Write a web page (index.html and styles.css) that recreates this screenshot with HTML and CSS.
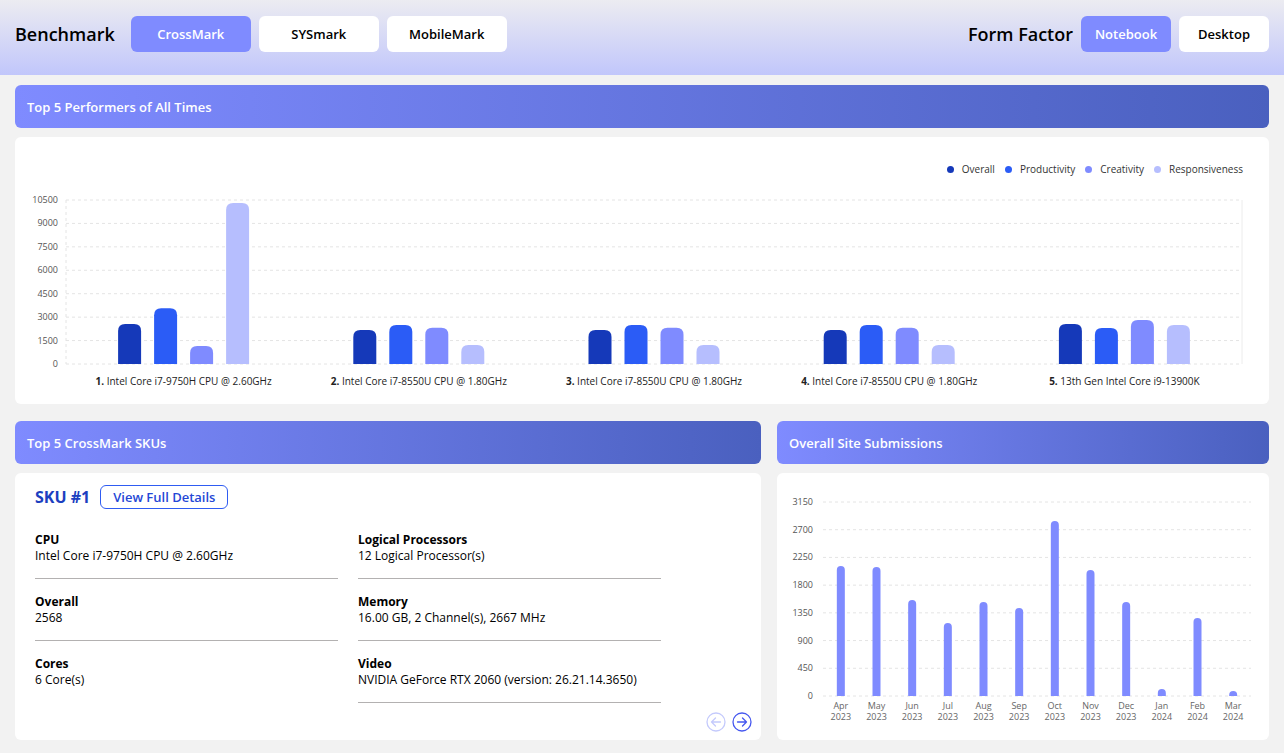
FILE: index.html
```html
<!DOCTYPE html>
<html lang="en">
<head>
  <meta charset="UTF-8">
  <meta name="viewport" content="width=device-width, initial-scale=1.0">
  <title>Benchmark Dashboard</title>
  <link rel="stylesheet" href="styles.css">
</head>
<body>
  <header class="topbar">
    <div class="switch">
      <span class="switch-title wide">Benchmark</span>
      <button class="tab active">CrossMark</button>
      <button class="tab">SYSmark</button>
      <button class="tab">MobileMark</button>
    </div>
    <div class="switch">
      <span class="switch-title">Form Factor</span>
      <button class="tab narrow active">Notebook</button>
      <button class="tab narrow">Desktop</button>
    </div>
  </header>

  <main class="content">
    <section class="panel">
      <h2 class="panel-title">Top 5 Performers of All Times</h2>
      <div class="card perf-card">
        <div class="legend">
          <span class="legend-item"><i class="dot c1"></i>Overall</span>
          <span class="legend-item"><i class="dot c2"></i>Productivity</span>
          <span class="legend-item"><i class="dot c3"></i>Creativity</span>
          <span class="legend-item"><i class="dot c4"></i>Responsiveness</span>
        </div>
        <svg id="perfChart" class="chart" width="1254" height="228"></svg>
      </div>
    </section>

    <div class="row">
      <section class="panel">
        <h2 class="panel-title">Top 5 CrossMark SKUs</h2>
        <div class="card sku-card">
          <div class="sku-head">
            <span class="sku-name">SKU #1</span>
            <button class="detail-btn">View Full Details</button>
          </div>
          <div class="sku-fields">
            <div class="sku-col">
              <div class="field">
                <div class="field-label">CPU</div>
                <div class="field-value">Intel Core i7-9750H CPU @ 2.60GHz</div>
              </div>
              <div class="field">
                <div class="field-label">Overall</div>
                <div class="field-value">2568</div>
              </div>
              <div class="field plain">
                <div class="field-label">Cores</div>
                <div class="field-value">6 Core(s)</div>
              </div>
            </div>
            <div class="sku-col">
              <div class="field">
                <div class="field-label">Logical Processors</div>
                <div class="field-value">12 Logical Processor(s)</div>
              </div>
              <div class="field">
                <div class="field-label">Memory</div>
                <div class="field-value">16.00 GB, 2 Channel(s), 2667 MHz</div>
              </div>
              <div class="field">
                <div class="field-label">Video</div>
                <div class="field-value">NVIDIA GeForce RTX 2060 (version: 26.21.14.3650)</div>
              </div>
            </div>
          </div>
          <div class="pager">
            <button class="page-btn disabled" aria-label="Previous">
              <svg width="20" height="20" viewBox="0 0 20 20"><circle cx="10" cy="10" r="9" /><path d="M14.5 10H5.5M9.5 6L5.5 10L9.5 14" /></svg>
            </button>
            <button class="page-btn" aria-label="Next">
              <svg width="20" height="20" viewBox="0 0 20 20"><circle cx="10" cy="10" r="9" /><path d="M5.5 10H14.5M10.5 6L14.5 10L10.5 14" /></svg>
            </button>
          </div>
        </div>
      </section>

      <section class="panel">
        <h2 class="panel-title">Overall Site Submissions</h2>
        <div class="card sub-card">
          <svg id="subChart" class="chart" width="492" height="267"></svg>
        </div>
      </section>
    </div>
  </main>

  <script>
    (function () {
      // rounded-top bar
      function bar(x, y, w, h, r, color) {
        r = Math.min(r, h);
        return `<path fill="${color}" d="M${x},${y + h} V${y + r} Q${x},${y} ${x + r},${y} H${x + w - r} Q${x + w},${y} ${x + w},${y + r} V${y + h} Z"/>`;
      }

      // Top 5 performers
      const perfColors = ['#1539b9', '#2b5cf6', '#7f8bff', '#b6befe'];
      const performers = [
        { n: '1.', name: 'Intel Core i7-9750H CPU @ 2.60GHz', v: [2568, 3566, 1152, 10307] },
        { n: '2.', name: 'Intel Core i7-8550U CPU @ 1.80GHz', v: [2177, 2497, 2324, 1216] },
        { n: '3.', name: 'Intel Core i7-8550U CPU @ 1.80GHz', v: [2177, 2497, 2324, 1216] },
        { n: '4.', name: 'Intel Core i7-8550U CPU @ 1.80GHz', v: [2177, 2497, 2324, 1216] },
        { n: '5.', name: '13th Gen Intel Core i9-13900K', v: [2561, 2305, 2817, 2497] }
      ];
      let yTop = 24, yBottom = 188, xLeft = 51, xRight = 1227, max = 10500;
      let out = '';
      for (let i = 0; i <= 7; i++) {
        const val = i * 1500;
        const y = yBottom - val / max * (yBottom - yTop);
        out += `<line class="grid" x1="${xLeft}" x2="${xRight}" y1="${y}" y2="${y}"/>`;
        out += `<text class="tick" x="43" y="${y + 3}" text-anchor="end">${val}</text>`;
      }
      out += `<line class="grid" x1="${xLeft}" x2="${xLeft}" y1="${yTop}" y2="${yBottom}"/>`;
      out += `<line class="edge" x1="${xRight}" x2="${xRight}" y1="${yTop}" y2="${yBottom}"/>`;
      const groupW = (xRight - xLeft) / performers.length;
      performers.forEach((p, i) => {
        const cx = xLeft + groupW * (i + 0.5);
        p.v.forEach((val, j) => {
          const h = val / max * (yBottom - yTop);
          out += bar(cx + (j - 1.5) * 36 - 11.5, yBottom - h, 23, h, 7, perfColors[j]);
        });
        out += `<text class="xlabel" x="${cx}" y="208.5" text-anchor="middle"><tspan font-weight="700">${p.n}</tspan> ${p.name}</text>`;
      });
      document.getElementById('perfChart').innerHTML = out;

      // Site submissions
      const months = [
        ['Apr', '2023', 2111], ['May', '2023', 2095], ['Jun', '2023', 1559], ['Jul', '2023', 1185],
        ['Aug', '2023', 1526], ['Sep', '2023', 1429], ['Oct', '2023', 2841], ['Nov', '2023', 2046],
        ['Dec', '2023', 1526], ['Jan', '2024', 114], ['Feb', '2024', 1266], ['Mar', '2024', 81]
      ];
      yTop = 29; yBottom = 223; xLeft = 46; xRight = 474; max = 3150;
      out = '';
      for (let i = 0; i <= 7; i++) {
        const val = i * 450;
        const y = yBottom - val / max * (yBottom - yTop);
        out += `<line class="grid" x1="${xLeft}" x2="${xRight}" y1="${y}" y2="${y}"/>`;
        out += `<text class="tick" x="36" y="${y + 3}" text-anchor="end">${val}</text>`;
      }
      const slot = (xRight - xLeft) / months.length;
      months.forEach((m, i) => {
        const cx = xLeft + slot * (i + 0.5);
        const h = m[2] / max * (yBottom - yTop);
        out += bar(cx - 4, yBottom - h, 8, h, 4, '#7f8bff');
        out += `<text class="mlabel" x="${cx}" y="235.5" text-anchor="middle">${m[0]}</text>`;
        out += `<text class="mlabel" x="${cx}" y="246.5" text-anchor="middle">${m[1]}</text>`;
      });
      document.getElementById('subChart').innerHTML = out;
    })();
  </script>
</body>
</html>
```

FILE: styles.css
```css
* {
  box-sizing: border-box;
}
body {
  margin: 0;
  background: #f2f2f2;
  font-family: "Open Sans", "Noto Sans", sans-serif;
  color: #000;
}
button {
  font-family: inherit;
  cursor: pointer;
}

/* top bar */
.topbar {
  display: flex;
  justify-content: space-between;
  align-items: center;
  height: 75px;
  padding: 0 15px 7px;
  background: linear-gradient(180deg, #ececf1 0%, #c1c6fb 100%);
}
.switch {
  display: flex;
  align-items: center;
  gap: 8px;
}
.switch-title {
  font-size: 18px;
  font-weight: 600;
}
.switch-title.wide {
  margin-right: 8px;
}
.tab {
  width: 120px;
  height: 36px;
  border: none;
  border-radius: 6px;
  background: #fff;
  color: #000;
  font-size: 13px;
  font-weight: 600;
}
.tab.narrow {
  width: 90px;
}
.tab.active {
  background: #7f8bff;
  color: #fff;
}

/* panels */
.content {
  padding: 10px 15px 13px;
}
.panel-title {
  display: flex;
  align-items: center;
  height: 43px;
  margin: 0 0 9px;
  padding: 0 12px;
  border-radius: 6px;
  background: linear-gradient(90deg, #7f8bff 0%, #4a60bf 100%);
  color: #fff;
  font-size: 13px;
  font-weight: 600;
}
.card {
  background: #fff;
  border-radius: 6px;
}
.row {
  display: grid;
  grid-template-columns: 746px 1fr;
  gap: 16px;
  margin-top: 17px;
}

/* charts */
.perf-card {
  height: 267px;
}
.legend {
  display: flex;
  justify-content: flex-end;
  gap: 10px;
  height: 39px;
  padding: 25px 26px 0 0;
  font-size: 10px;
  line-height: 14px;
  color: #333;
}
.legend-item {
  display: flex;
  align-items: center;
  gap: 8px;
}
.dot {
  width: 7px;
  height: 7px;
  border-radius: 50%;
}
.c1 { background: #1539b9; }
.c2 { background: #2b5cf6; }
.c3 { background: #7f8bff; }
.c4 { background: #b6befe; }
.chart {
  display: block;
}
.chart text {
  font-family: "Open Sans", "Noto Sans", sans-serif;
}
.chart .grid {
  stroke: #e4e4e4;
  stroke-width: 1;
  stroke-dasharray: 3 3;
}
.chart .edge {
  stroke: #ececec;
  stroke-width: 1;
}
.chart .tick {
  font-size: 9px;
  fill: #555;
}
.chart .xlabel {
  font-size: 10px;
  fill: #222;
}
.chart .mlabel {
  font-size: 9px;
  fill: #666;
}
.sub-card {
  height: 267px;
}

/* sku card */
.sku-card {
  display: flex;
  flex-direction: column;
  height: 267px;
  padding: 12px 9px 8px 20px;
}
.sku-head {
  display: flex;
  align-items: center;
  gap: 10px;
  height: 24px;
}
.sku-name {
  font-size: 16px;
  font-weight: 700;
  color: #1c3fc0;
}
.detail-btn {
  height: 24px;
  padding: 0 12px;
  border: 1px solid #2f5cf2;
  border-radius: 6px;
  background: #fff;
  color: #2447d6;
  font-size: 13px;
  font-weight: 600;
}
.sku-fields {
  display: grid;
  grid-template-columns: 303px 303px;
  column-gap: 20px;
  margin-top: 8px;
}
.field {
  padding: 15px 0 14px;
  border-bottom: 1px solid #b3b1b1;
  font-size: 12px;
  line-height: 16px;
}
.field.plain {
  border-bottom: none;
}
.field-label {
  font-weight: 700;
}
.pager {
  display: flex;
  justify-content: flex-end;
  gap: 6px;
  margin-top: auto;
}
.page-btn {
  width: 20px;
  height: 20px;
  padding: 0;
  border: none;
  background: none;
  color: #4658ef;
}
.page-btn.disabled {
  color: #c4cafc;
}
.page-btn svg {
  display: block;
  fill: none;
  stroke: currentColor;
  stroke-width: 1.3;
  stroke-linecap: round;
  stroke-linejoin: round;
}
```
